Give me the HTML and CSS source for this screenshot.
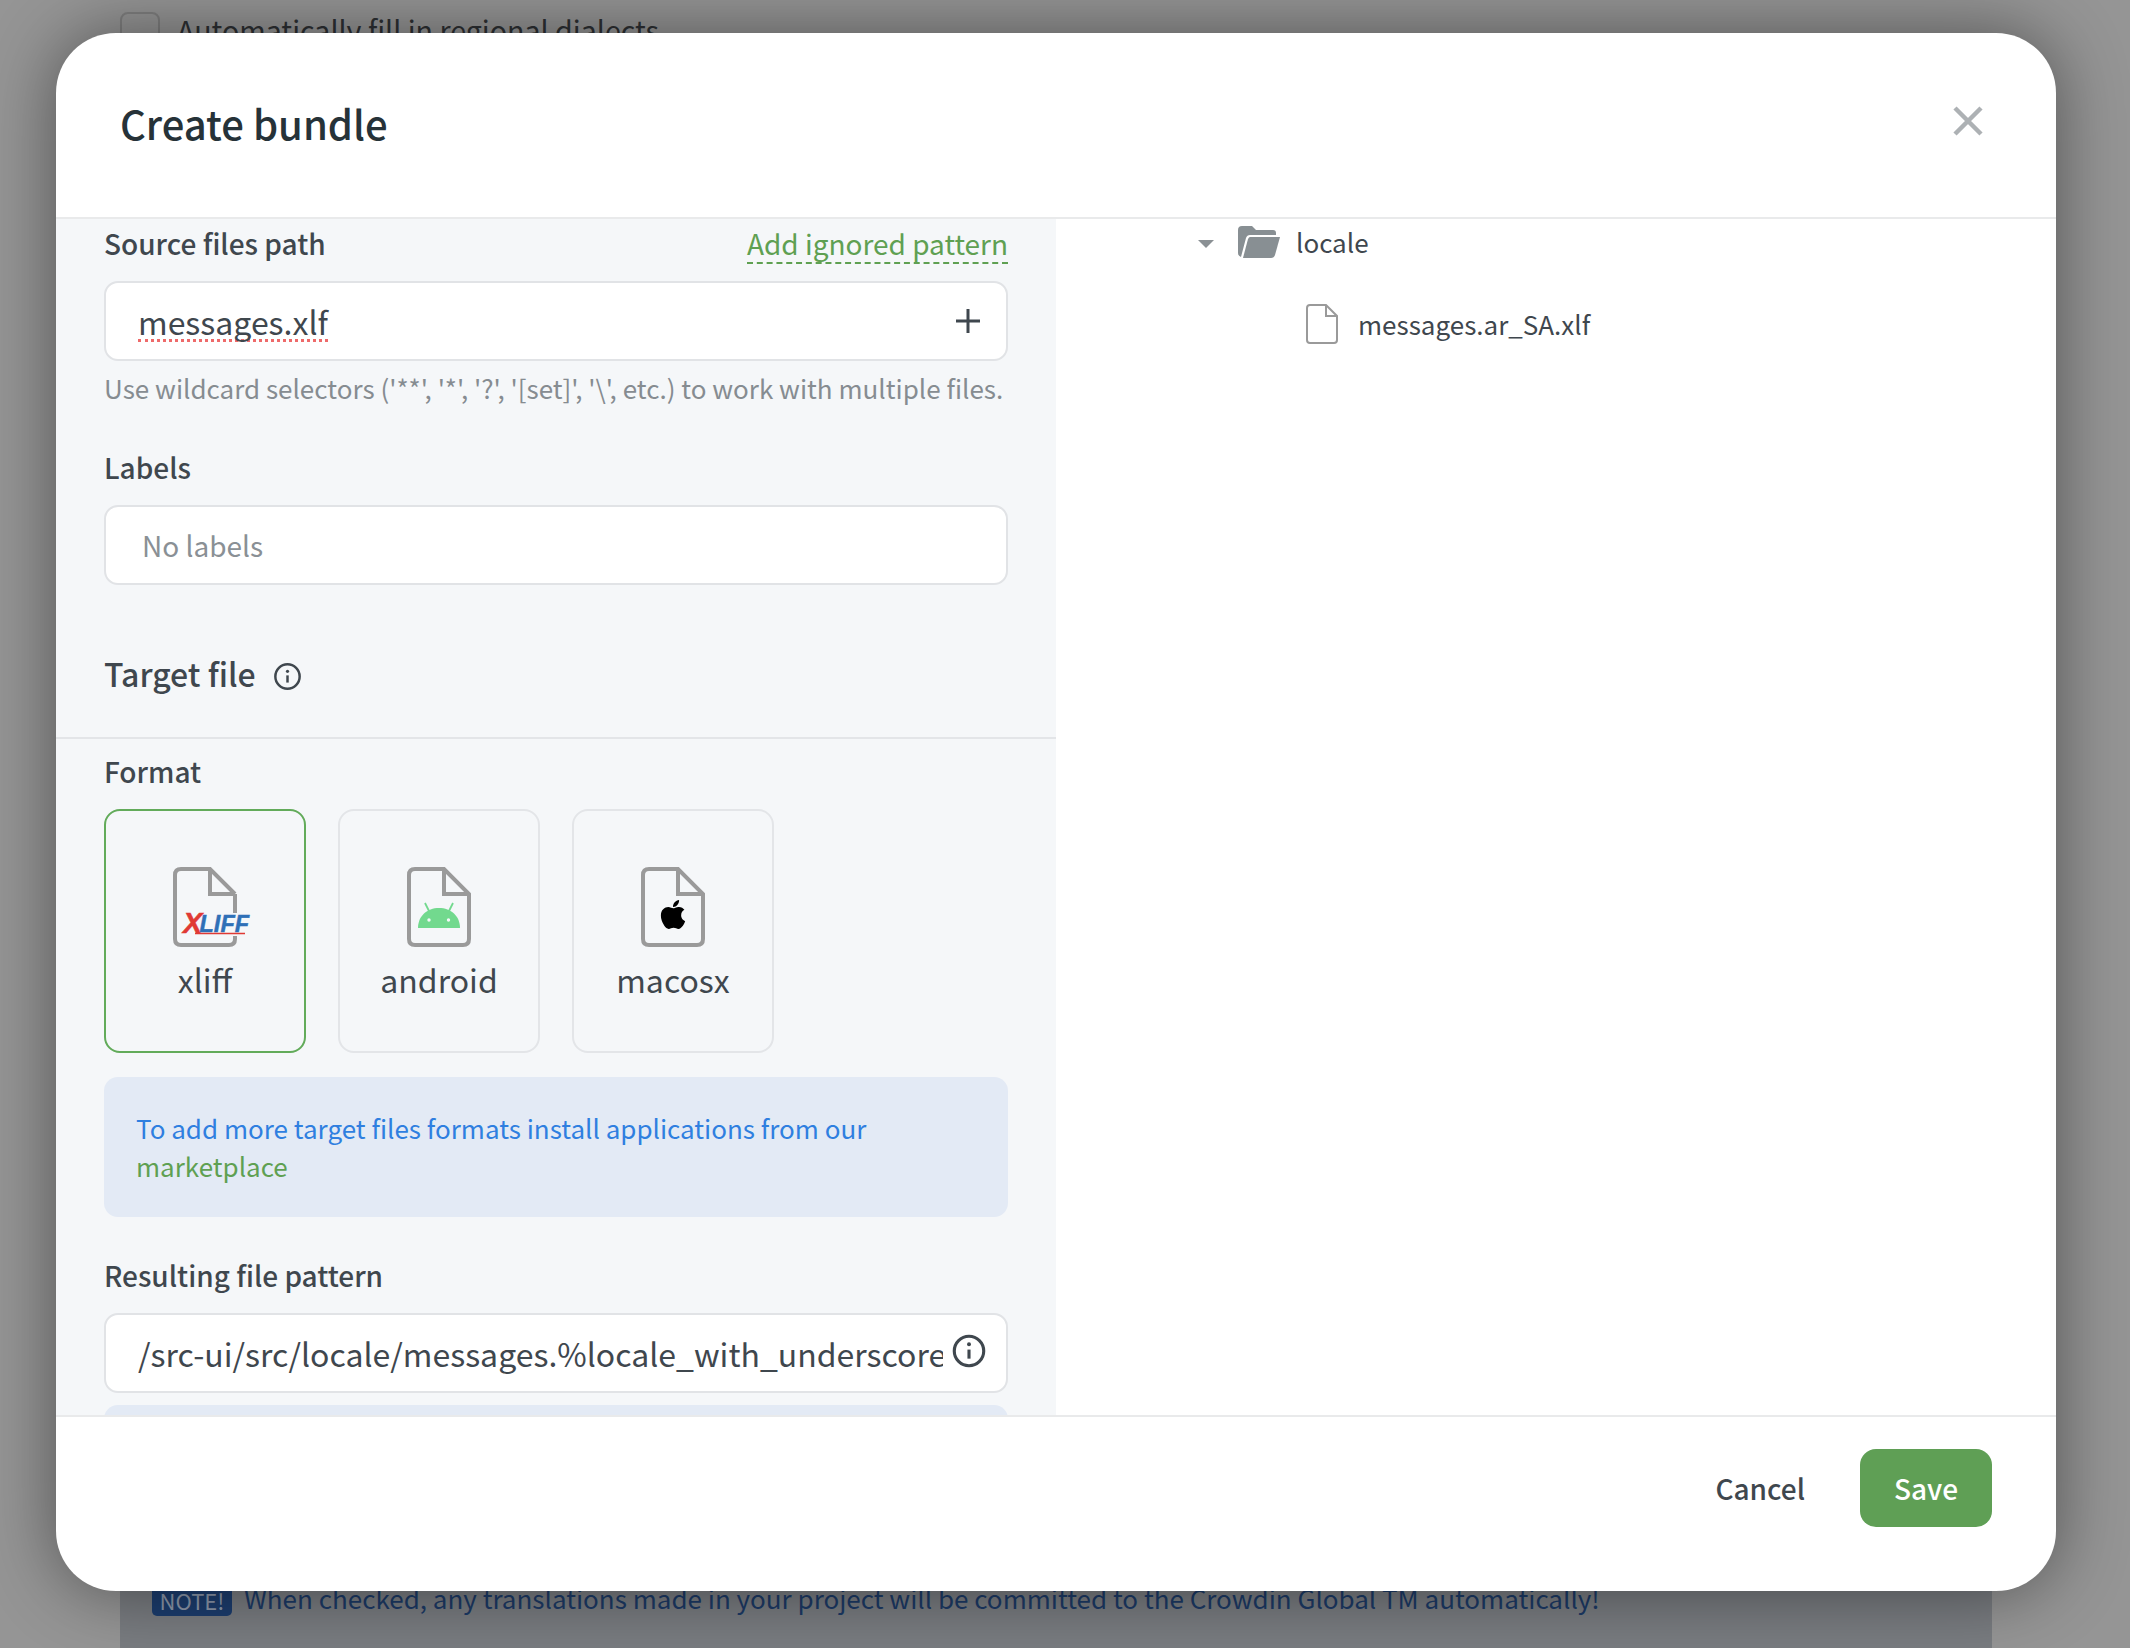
FILE: index.html
```html
<!DOCTYPE html>
<html lang="en">
<head>
<meta charset="utf-8">
<title>Create bundle</title>
<link rel="stylesheet" href="styles.css">
</head>
<body>
<div class="page">
  <div class="page-check"><span class="checkbox"></span><span>Automatically fill in regional dialects</span></div>
  <div class="page-note"><span class="badge">NOTE!</span><span>When checked, any translations made in your project will be committed to the Crowdin Global TM automatically!</span></div>
</div>
<div class="modal">
  <header class="modal-head">
    <h1 class="modal-title">Create bundle</h1>
    <svg class="close" viewBox="0 0 30 30" aria-label="Close"><path d="M2 2 28 28M28 2 2 28"/></svg>
  </header>
  <div class="modal-body">
    <section class="left">
      <div class="label-row first">
        <span class="label">Source files path</span>
        <span class="link-dashed">Add ignored pattern</span>
      </div>
      <div class="input">
        <span class="value"><span class="misspelled">messages.xlf</span></span>
        <svg class="plus" viewBox="0 0 24 24"><path d="M12 0v24M0 12h24"/></svg>
      </div>
      <p class="hint">Use wildcard selectors ('**', '*', '?', '[set]', '\', etc.) to work with multiple files.</p>
      <div class="label-row labels-row"><span class="label">Labels</span></div>
      <div class="input"><span class="placeholder">No labels</span></div>
      <div class="section-head">
        <span class="section-title">Target file</span>
        <svg class="info small" viewBox="0 0 24 24"><circle cx="12" cy="12" r="10.8"/><path d="M12 11v6.4"/><circle class="dot" cx="12" cy="7.4" r="1.4"/></svg>
      </div>
      <div class="label-row format-row"><span class="label">Format</span></div>
      <div class="cards">
        <div class="card selected">
          <svg class="doc" viewBox="0 0 78 80">
            <path class="doc-line" d="M62 27V46M62 69V72Q62 78 56 78H8Q2 78 2 72V8Q2 2 8 2H37L62 27M37 2V27H62"/>
            <text class="xl-x" x="10" y="66">X</text>
            <text class="xl-l" x="26.5" y="65">LIFF</text>
            <path class="xl-u" d="M22 66.5H72"/>
          </svg>
          <span class="card-name">xliff</span>
        </div>
        <div class="card">
          <svg class="doc" viewBox="0 0 78 80">
            <path class="doc-line" d="M8 2H37L62 27V72Q62 78 56 78H8Q2 78 2 72V8Q2 2 8 2ZM37 2V27H62"/>
            <path class="droid-ant" d="M18 36 22 44M46 36 42 44"/>
            <path class="droid" d="M11 61C11 49 20 41 32 41S53 49 53 61Z"/>
            <circle class="droid-eye" cx="22" cy="53" r="1.7"/>
            <circle class="droid-eye" cx="41.5" cy="53" r="1.7"/>
          </svg>
          <span class="card-name">android</span>
        </div>
        <div class="card">
          <svg class="doc" viewBox="0 0 78 80">
            <path class="doc-line" d="M8 2H37L62 27V72Q62 78 56 78H8Q2 78 2 72V8Q2 2 8 2ZM37 2V27H62"/>
            <svg x="19" y="31" width="26" height="33" viewBox="0 0 384 512"><path d="M318.7 268.7c-.2-36.7 16.4-64.4 50-84.8-18.8-26.9-47.2-41.7-84.7-44.6-35.5-2.8-74.3 20.7-88.5 20.7-15 0-49.4-19.7-76.4-19.7C63.3 141.2 4 184.8 4 273.5q0 39.3 14.4 81.2c12.8 36.7 59 126.7 107.2 125.2 25.2-.6 43-17.9 75.8-17.9 31.8 0 48.3 17.9 76.4 17.9 48.6-.7 90.4-82.5 102.6-119.3-65.2-30.7-61.7-90-61.7-91.9zm-56.6-164.2c27.3-32.4 24.8-61.9 24-72.5-24.1 1.4-52 16.4-67.9 34.9-17.5 19.8-27.8 44.3-25.6 71.9 26.1 2 49.9-11.4 69.5-34.3z"/></svg>
          </svg>
          <span class="card-name">macosx</span>
        </div>
      </div>
      <div class="notice">To add more target files formats install applications from our <span class="notice-link">marketplace</span></div>
      <div class="label-row result-row"><span class="label">Resulting file pattern</span></div>
      <div class="input">
        <span class="value clipped">/src-ui/src/locale/messages.%locale_with_underscore%.xlf</span>
        <svg class="info large" viewBox="0 0 24 24"><circle cx="12" cy="12" r="10.4"/><path d="M12 11v6.4"/><circle class="dot" cx="12" cy="7.2" r="1.4"/></svg>
      </div>
      <div class="notice next"></div>
    </section>
    <section class="tree">
      <div class="tree-row folder-row">
        <svg class="caret" viewBox="0 0 16 8"><path d="M0 0H16L8 8Z"/></svg>
        <svg class="folder" viewBox="0 0 42 32"><path d="M4 0H14L18 4H35Q38 4 38 7V9H12Q9 9 8 12L3 31Q0 30 0 27V4Q0 0 4 0Z"/><path d="M12 11H42L37 29Q36 32 33 32H5L10 13Q11 11 12 11Z"/></svg>
        <span class="tree-name">locale</span>
      </div>
      <div class="tree-row file-row">
        <svg class="file" viewBox="0 0 32 40"><path d="M4 1H20L31 12V36Q31 39 28 39H4Q1 39 1 36V4Q1 1 4 1ZM20 1V12H31"/></svg>
        <span class="tree-name">messages.ar_SA.xlf</span>
      </div>
    </section>
  </div>
  <footer class="modal-foot">
    <span class="cancel">Cancel</span>
    <span class="save">Save</span>
  </footer>
</div>
</body>
</html>
```
FILE: styles.css
```css
* { box-sizing: border-box; }
html, body { margin: 0; height: 100%; }
body {
  width: 2130px;
  height: 1648px;
  overflow: hidden;
  position: relative;
  background: #959595;
  font-family: "Noto Sans CJK JP", "Noto Sans", sans-serif;
  color: #3f474e;
}

/* dimmed page behind the dialog */
.page {
  height: 1648px;
  padding: 12px 138px 0 120px;
  display: flex;
  flex-direction: column;
  justify-content: space-between;
}
.page-check {
  display: flex;
  gap: 17px;
  font-size: 28.6px;
  line-height: 36px;
  color: #2d3033;
}
.checkbox {
  width: 40px;
  height: 40px;
  flex: none;
  border: 2px solid #7f7f7f;
  border-radius: 8px;
}
.page-note {
  height: 110px;
  padding: 40px 0 0 32px;
  display: flex;
  align-items: flex-start;
  gap: 12px;
  background: #797c80;
  color: #1c3a66;
  font-size: 26px;
  line-height: 40px;
}
.badge {
  width: 80px;
  height: 44px;
  margin-top: -6px;
  padding-top: 10px;
  line-height: 36px;
  text-align: center;
  border-radius: 5px;
  background: #1c3d6e;
  color: #8d98aa;
  font-size: 22px;
  flex: none;
}

/* dialog */
.modal {
  position: absolute;
  left: 56px;
  top: 33px;
  width: 2000px;
  height: 1558px;
  display: flex;
  flex-direction: column;
  background: #fff;
  border-radius: 60px;
  overflow: hidden;
  box-shadow: 0 0 70px rgba(0, 0, 0, 0.45);
}
.modal-head {
  height: 186px;
  flex: none;
  display: flex;
  justify-content: space-between;
  padding: 0 73px 0 64px;
  border-bottom: 2px solid #e9eaeb;
}
.modal-title {
  margin: 58px 0 0;
  font-size: 40px;
  line-height: 64px;
  font-weight: 500;
  color: #263238;
}
.close {
  width: 30px;
  height: 30px;
  margin-top: 73px;
}
.close path { stroke: #adb1b4; stroke-width: 4.5; fill: none; }

.modal-body {
  flex: 1;
  min-height: 0;
  display: flex;
}
.left {
  width: 1000px;
  flex: none;
  padding: 5px 48px 0 48px;
  background: #f5f7f9;
  overflow: hidden;
}
.label-row {
  display: flex;
  justify-content: space-between;
  align-items: flex-start;
  height: 38px;
  line-height: 38px;
  margin-bottom: 19px;
}
.label { font-size: 28px; font-weight: 500; color: #3f474e; }
.link-dashed {
  font-size: 28px;
  color: #5fa052;
  height: 40px;
  border-bottom: 2px dashed #5fa052;
}
.input {
  height: 80px;
  display: flex;
  align-items: center;
  justify-content: space-between;
  padding: 0 20px 0 32px;
  background: #fff;
  border: 2px solid #e1e3e6;
  border-radius: 14px;
  font-size: 32px;
}
.value { line-height: 44px; color: #3f474e; }
.misspelled { display: inline-block; height: 42px; border-bottom: 3px dotted #ee6a6a; line-height: 42px; }
.clipped { width: 805px; flex: none; overflow: hidden; white-space: nowrap; }
.placeholder { font-size: 28px; color: #8a9095; margin: -1px 0 0 4px; }
.plus { width: 24px; height: 24px; margin-right: 6px; }
.plus path { stroke: #3f474e; stroke-width: 3; fill: none; }
.hint {
  margin: 8px 0 41px;
  font-size: 26px;
  line-height: 38px;
  color: #868c91;
  white-space: nowrap;
}
.section-head {
  margin: 63px -48px 0 -48px;
  padding: 0 48px 39px 48px;
  display: flex;
  align-items: center;
  gap: 18px;
  border-bottom: 2px solid #e3e5e8;
}
.section-title { font-size: 32px; line-height: 50px; font-weight: 500; }
.info { fill: none; stroke: #3f474e; flex: none; }
.info .dot { fill: #3f474e; stroke: none; }
.info path, .info circle { stroke-width: 2.2; }
.info.small { width: 27px; height: 27px; margin-top: 6px; }
.info.large { width: 34px; height: 34px; margin: -4px 0 0 0; }
.format-row { margin-top: 13px; }
.cards { display: flex; gap: 32px; }
.card {
  width: 202px;
  height: 244px;
  padding-top: 56px;
  display: flex;
  flex-direction: column;
  align-items: center;
  border: 2px solid #e3e5e8;
  border-radius: 16px;
}
.card.selected { border-color: #62ab5a; }
.doc { width: 78px; height: 80px; margin-left: 14px; }
.doc-line { fill: none; stroke: #9a9a9a; stroke-width: 4; }
.xl-x { font: italic 700 29px "Liberation Sans", sans-serif; fill: #e03a34; stroke: #e03a34; stroke-width: 0.5; }
.xl-l { font: italic 700 23.5px "Liberation Sans", sans-serif; fill: #2f70b7; stroke: #2f70b7; stroke-width: 0.4; }
.xl-u { stroke: #e03a34; stroke-width: 1.4; }
.droid { fill: #72d98e; }
.droid-ant { stroke: #72d98e; stroke-width: 1.8; fill: none; }
.droid-eye { fill: #f5f7f9; }
.card-name { margin-top: 10px; font-size: 32px; line-height: 44px; color: #3f474e; }
.notice {
  margin-top: 24px;
  height: 140px;
  padding: 32px 32px 0;
  border-radius: 14px;
  background: #e3eaf5;
  font-size: 26px;
  line-height: 38px;
  color: #2f7fe0;
}
.notice-link { color: #5fa052; }
.notice.next { margin-top: 12px; }
.result-row { margin-top: 39px; }

.tree { flex: 1; padding: 4px 0 0 142px; font-size: 26px; color: #3f474e; }
.tree-row { display: flex; align-items: center; }
.folder-row { height: 38px; }
.file-row { height: 40px; margin-top: 43px; padding-left: 108px; gap: 20px; }
.caret { width: 16px; height: 8px; fill: #8a9094; margin-top: 3px; }
.folder { width: 42px; height: 32px; margin: 0 0 0 24px; fill: #888f93; }
.tree-name { line-height: 38px; }
.folder-row .tree-name { margin-left: 16px; }
.file { width: 32px; height: 40px; fill: #fff; stroke: #9a9a9a; stroke-width: 2; }

.modal-foot {
  height: 176px;
  flex: none;
  display: flex;
  align-items: flex-start;
  justify-content: flex-end;
  gap: 55px;
  padding: 32px 64px 0 0;
  border-top: 2px solid #e9eaeb;
  font-size: 28px;
  font-weight: 500;
}
.cancel { line-height: 78px; color: #3f474e; }
.save {
  width: 132px;
  height: 78px;
  line-height: 78px;
  text-align: center;
  border-radius: 16px;
  background: #5f9f55;
  color: #fff;
}
```
